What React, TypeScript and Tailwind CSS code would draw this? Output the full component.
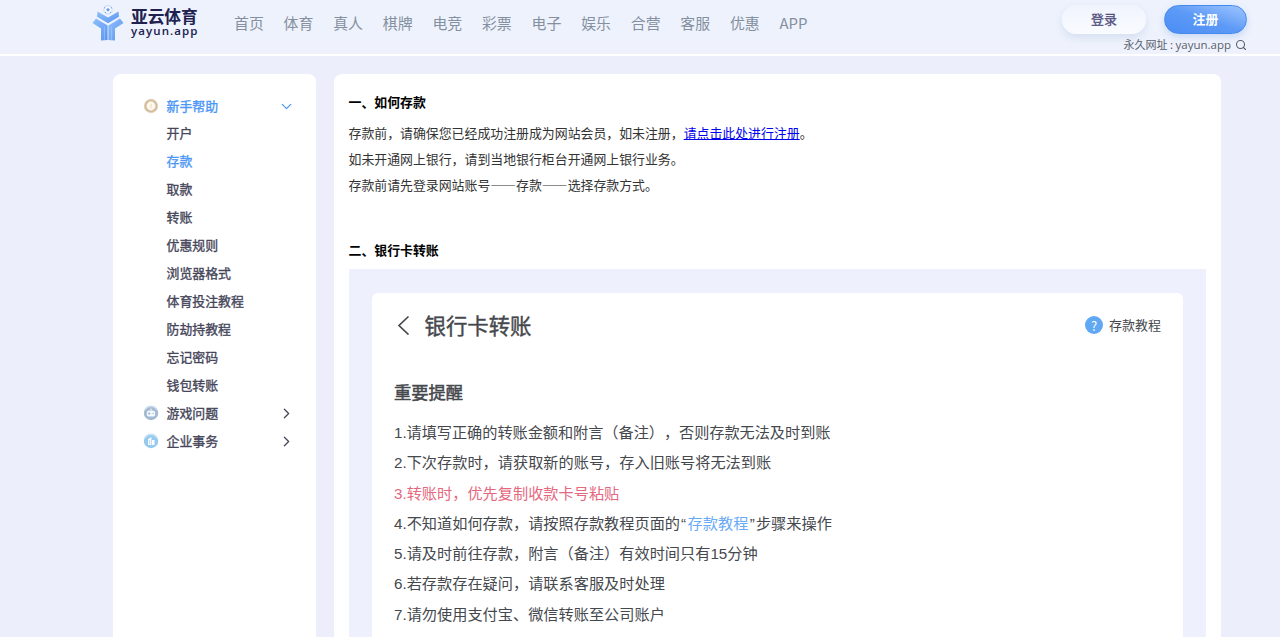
import { ChevronDown, ChevronRight, Search } from "lucide-react";

type SubItem = {
  nome: string;
  active?: boolean;
};

const NAV = ["首页", "体育", "真人", "棋牌", "电竞", "彩票", "电子", "娱乐", "合营", "客服", "优惠", "APP"];

const AJUDA: SubItem[] = [
  { nome: "开户" },
  { nome: "存款", active: true },
  { nome: "取款" },
  { nome: "转账" },
  { nome: "优惠规则" },
  { nome: "浏览器格式" },
  { nome: "体育投注教程" },
  { nome: "防劫持教程" },
  { nome: "忘记密码" },
  { nome: "钱包转账" },
];

function Logo() {
  return (
    <svg className="h-[36px] w-[32px] shrink-0" viewBox="0 0 32 36" fill="none">
      <defs>
        <linearGradient id="logo" x1="0" y1="0" x2="1" y2="1">
          <stop offset="0" stopColor="#8fc1fb" />
          <stop offset="1" stopColor="#5b93f0" />
        </linearGradient>
      </defs>
      <circle cx="16" cy="4.7" r="4.1" fill="#f3f8ff" stroke="#b9d2f7" strokeWidth="0.8" />
      <path d="M16 3l1.7 1.3-.7 2h-2l-.7-2z" fill="#6f9ae8" />
      <path d="M12 3.2l1.2-1M20 3.2l-1.2-1M13 8l1-1M19 8l-1-1" stroke="#6f9ae8" strokeWidth="1" />
      <path d="M5.5 6.5L16 12.6 26.5 6.5 27 11.7 16 18.2 5 11.7z" fill="url(#logo)" />
      <path d="M4 13.6l11.6 6.9V35l-6.6.6V23.5L.5 18z" fill="url(#logo)" />
      <path d="M28 13.6l-11.6 6.9V35l6.6.6V23.5l8.5-5.5z" fill="url(#logo)" />
      <path d="M12.4 21.5V35M19.6 21.5V35" stroke="#b5d6ff" strokeWidth="0.5" />
    </svg>
  );
}

/* ================= ÍCONES DO MENU ================= */
function CoinIcon() {
  return (
    <svg className="h-4 w-4" viewBox="0 0 16 16">
      <circle cx="8" cy="8" r="7.2" fill="#e3d2b6" />
      <circle cx="8" cy="8" r="5.4" fill="none" stroke="#cdb896" strokeWidth="1.4" />
      <circle cx="8" cy="8" r="4.4" fill="#fff8ee" />
      <path d="M8 5.8v4.4" stroke="#efe0c6" strokeWidth="1.3" />
    </svg>
  );
}

function GameIcon() {
  return (
    <svg className="h-4 w-4" viewBox="0 0 16 16">
      <circle cx="8" cy="8" r="7.2" fill="#a3b9d2" />
      <path d="M2 5a7 7 0 0 1 12 0" fill="none" stroke="#c8dcef" strokeWidth="1.4" />
      <rect x="3.8" y="5.5" width="8.4" height="6" rx="2.6" fill="#f4f8fd" />
      <path d="M5 8.5h2.4M6.2 7.3v2.4M9.5 8.5h1.4" stroke="#9bb5d4" strokeWidth="0.9" />
      <path d="M8 3.5v2" stroke="#fff" />
    </svg>
  );
}

function CompanyIcon() {
  return (
    <svg className="h-4 w-4" viewBox="0 0 16 16">
      <circle cx="8" cy="8" r="7.2" fill="#96c9ee" />
      <path d="M2 5a7 7 0 0 1 12 0" fill="none" stroke="#c2e4f8" strokeWidth="1.4" />
      <path d="M5 12V6.2L8.4 4v8zM9 7h2.5v5H9z" fill="#fff" />
      <path d="M6.7 7v4" stroke="#96c9ee" strokeWidth="0.7" />
    </svg>
  );
}

export default function App() {
  return (
    <div
      lang="zh-CN"
      className="h-[637px] w-[1280px] overflow-hidden bg-[#eceefb] font-['Noto_Sans_CJK_SC',sans-serif] text-[12.9px] text-[#333] [text-spacing-trim:space-all]"
    >
      {/* ================= NAVBAR ================= */}
      <header className="flex h-14 border-b-2 border-white bg-linear-to-b from-[#edf2fd] to-[#eff2fc] pl-[92px]">
        <div className="flex pt-[5px]">
          <Logo />
          <div className="ml-[7px] w-[88px] text-[#20214f]">
            <div className="text-[16.7px] leading-[22px] font-bold">亚云体育</div>
            <div className="-mt-[2px] font-['Open_Sans',sans-serif] text-[11.5px] leading-[12px] font-semibold tracking-[1.1px]">
              yayun.app
            </div>
          </div>
        </div>

        <nav className="ml-[15px] flex h-[46px] items-center gap-[19.8px] text-[14.9px] text-[#84909f]">
          {NAV.map((n) => (
            <a key={n} href="#">
              {n}
            </a>
          ))}
        </nav>

        <div className="mr-[33px] ml-auto flex flex-col items-end pt-[5px]">
          <div className="flex gap-[18px]">
            <button className="h-[29px] w-[84px] rounded-full bg-linear-to-b from-[#f0f4fd] to-[#f9fbff] pb-[2px] text-[12.9px] text-[#514f7c] shadow-[0_4px_8px_#d5e0f1] [-webkit-text-stroke:0.3px]">
              登录
            </button>
            <button className="h-[29px] w-[83px] rounded-full border border-[#4689ef] bg-linear-to-tr from-[#4a8df5] via-[#5d9af6] to-[#a0c6ff] pb-[2px] text-[12.9px] font-bold text-white shadow-[0_3px_7px_#c8d8f2]">
              注册
            </button>
          </div>
          <div className="mt-[2px] flex items-center gap-1 text-[11px] leading-4 text-[#57606e]">
            <span>
              永久网址 : <span className="font-['Open_Sans',sans-serif] text-[11.5px]">yayun.app</span>
            </span>
            <Search size={12} strokeWidth={2.2} />
          </div>
        </div>
      </header>

      <div className="flex gap-[18px] pt-[18px] pl-[113px]">
        {/* ================= MENU LATERAL ================= */}
        <aside className="h-[600px] w-[203px] rounded-lg bg-white pt-[18px] pr-[21px] pl-[30px] text-[#46465a] [-webkit-text-stroke:0.35px]">
          <div className="flex h-[27px] items-center text-[#4c97f5]">
            <CoinIcon />
            <span className="ml-[7.5px]">新手帮助</span>
            <ChevronDown className="mt-[2px] ml-auto" size={17} strokeWidth={1.8} />
          </div>
          {AJUDA.map((item) => (
            <div
              key={item.nome}
              className={`flex h-[28px] items-center pl-[23.5px] ${item.active ? "text-[#4c97f5]" : ""}`}
            >
              {item.nome}
            </div>
          ))}
          <div className="flex h-[27.5px] items-center">
            <GameIcon />
            <span className="ml-[7.5px]">游戏问题</span>
            <ChevronRight className="mt-[2px] ml-auto" size={17} strokeWidth={1.8} />
          </div>
          <div className="flex h-7 items-center">
            <CompanyIcon />
            <span className="ml-[7.5px]">企业事务</span>
            <ChevronRight className="mt-[2px] ml-auto" size={17} strokeWidth={1.8} />
          </div>
        </aside>

        {/* ================= CONTEÚDO ================= */}
        <main className="h-[600px] w-[887px] rounded-lg bg-white pt-[14px] pr-[15px] pl-[14.5px]">
          <h3 className="leading-[27px] font-bold text-black">一、如何存款</h3>
          <div className="mt-[5px] leading-[26px]">
            <p>
              存款前，请确保您已经成功注册成为网站会员，如未注册，
              <a href="#" className="text-[#0000ee] underline">
                请点击此处进行注册
              </a>
              。
            </p>
            <p>如未开通网上银行，请到当地银行柜台开通网上银行业务。</p>
            <p>存款前请先登录网站账号——存款——选择存款方式。</p>
          </div>
          <h3 className="mt-[38px] leading-[27px] font-bold text-black">二、银行卡转账</h3>

          {/* Cartão de transferência */}
          <div className="mt-[6px] h-[400px] bg-[#eef0fd] px-[23.5px] pt-6">
            <div className="h-[400px] w-[811px] rounded-md bg-white px-[22px] pt-[16px] text-[#45484d]">
              <div className="flex h-8 items-center">
                <svg className="h-5 w-4" viewBox="0 0 16 20" fill="none" stroke="currentColor" strokeWidth="1.7">
                  <path d="M14.5 1.5L5 10.5l9.5 9" />
                </svg>
                <h2 className="ml-[14.5px] text-[21.4px] [-webkit-text-stroke:0.4px]">银行卡转账</h2>
                <div className="ml-auto flex items-center gap-[6px] text-[13px]">
                  <span className="flex h-[18px] w-[18px] items-center justify-center rounded-full bg-[#60a8f4] text-[13px] leading-none text-white">
                    ?
                  </span>
                  存款教程
                </div>
              </div>
              <h3 className="mt-[36px] text-[17.3px] leading-[29px] [-webkit-text-stroke:0.5px]">重要提醒</h3>
              <div className="mt-[12px] font-['Liberation_Sans','Noto_Sans_CJK_SC',sans-serif] text-[15.2px] leading-[30.25px]">
                <p className="tracking-[-0.05px]">1.请填写正确的转账金额和附言（备注），否则存款无法及时到账</p>
                <p>2.下次存款时，请获取新的账号，存入旧账号将无法到账</p>
                <p className="text-[#e5687e]">3.转账时，优先复制收款卡号粘贴</p>
                <p>
                  4.不知道如何存款，请按照存款教程页面的
                  <span className="ml-px">“</span>
                  <span className="mx-[1.5px] text-[#6aa9f7]">存款教程</span>
                  <span className="mr-px">”</span>步骤来操作
                </p>
                <p>5.请及时前往存款，附言（备注）有效时间只有15分钟</p>
                <p>6.若存款存在疑问，请联系客服及时处理</p>
                <p>7.请勿使用支付宝、微信转账至公司账户</p>
              </div>
            </div>
          </div>
        </main>
      </div>
    </div>
  );
}
